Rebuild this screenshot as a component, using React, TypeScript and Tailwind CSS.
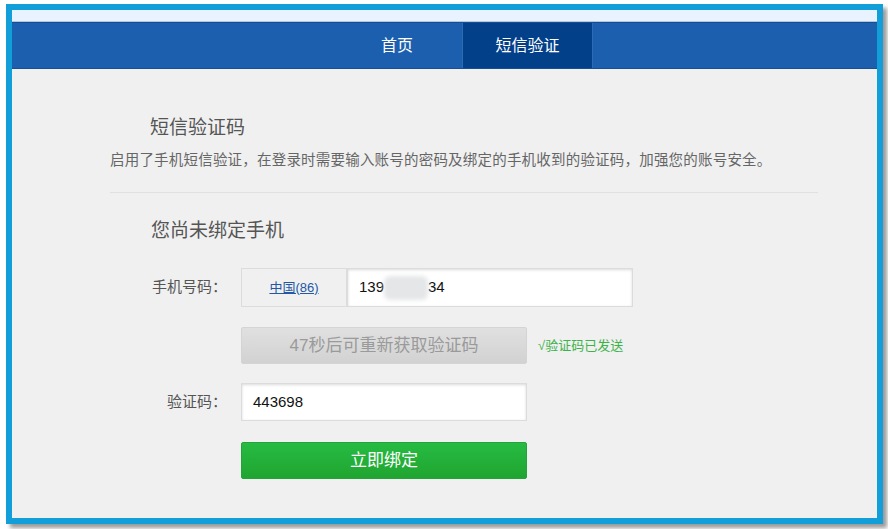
export default function App() {
  return (
    <div
      className="w-[888px] h-[529px] bg-white overflow-hidden"
      style={{ fontFamily: '"Liberation Sans","Noto Sans CJK SC",sans-serif' }}
    >
      <div className="ml-[6px] mt-[4px] w-[877px] h-[520px] border-[6px] border-[#129fd9] shadow-[4px_4px_4px_rgba(0,0,0,0.4)] flex flex-col bg-[#f0f0f0]">
        {/* top strip */}
        <div className="h-[12px] bg-[#e8f3ff] border-b border-[#b9c6d6]" />
        {/* nav */}
        <div className="h-[47px] bg-[#1c5fae] border-t border-[#134f96] border-b border-b-[#174f95] flex pl-[320px] text-white text-[16px]">
          <div className="w-[130px] flex items-center justify-center">首页</div>
          <div className="w-[131px] flex items-center justify-center bg-[#03408a] border-x border-[#2d6bb5]">
            短信验证
          </div>
        </div>

        {/* content */}
        <div className="pl-[98px] w-[806px]">
          <div className="mt-[46px] ml-[40px] text-[19px] leading-[26px] text-[#555]">短信验证码</div>
          <div className="mt-[8px] text-[14.5px] leading-[22px] tracking-[0.2px] text-[#666]">
            启用了手机短信验证，在登录时需要输入账号的密码及绑定的手机收到的验证码，加强您的账号安全。
          </div>
          <div className="mt-[21px] border-t border-[#e0e0e0]" />

          <div className="mt-[25px] ml-[41px] text-[19px] leading-[26px] text-[#555]">您尚未绑定手机</div>

          <div className="mt-[24px] flex items-center">
            <div className="w-[117px] text-right text-[15px] text-[#555]">手机号码：</div>
            <div className="ml-[14px] flex h-[39px]">
              <div className="w-[106px] bg-[#f0f0f0] border border-[#dcdcdc] flex items-center justify-center">
                <span className="text-[13px] text-[#2457a6] underline">中国(86)</span>
              </div>
              <div className="w-[286px] bg-white border border-[#dcdcdc] shadow-[inset_0_1px_3px_rgba(0,0,0,0.15)] flex items-center pl-[11px] text-[15px] text-[#111]">
                <span>139</span>
                <span className="inline-block w-[44px] h-[24px] bg-[#e4e6e8] blur-[2px] rounded-[6px]" />
                <span>34</span>
              </div>
            </div>
          </div>

          <div className="mt-[20px] ml-[131px] flex items-center">
            <div className="w-[286px] h-[37px] rounded-[2px] border border-[#d4d4d4] bg-gradient-to-b from-[#e0e0e0] to-[#d2d2d2] flex items-center justify-center text-[17px] text-[#9a9a9a]">
              47秒后可重新获取验证码
            </div>
            <div className="ml-[11px] text-[13px] text-[#3db24b]">√验证码已发送</div>
          </div>

          <div className="mt-[19px] flex items-center">
            <div className="w-[117px] text-right text-[15px] text-[#555]">验证码：</div>
            <div className="ml-[14px] w-[286px] h-[38px] bg-white border border-[#dcdcdc] shadow-[inset_0_1px_3px_rgba(0,0,0,0.15)] flex items-center pl-[11px] text-[15px] text-[#111]">
              443698
            </div>
          </div>

          <div className="mt-[21px] ml-[131px] w-[286px] h-[37px] rounded-[2px] border border-[#23a33a] bg-gradient-to-b from-[#26bb42] to-[#20a530] flex items-center justify-center text-[17px] text-white">
            立即绑定
          </div>
        </div>
      </div>
    </div>
  );
}
